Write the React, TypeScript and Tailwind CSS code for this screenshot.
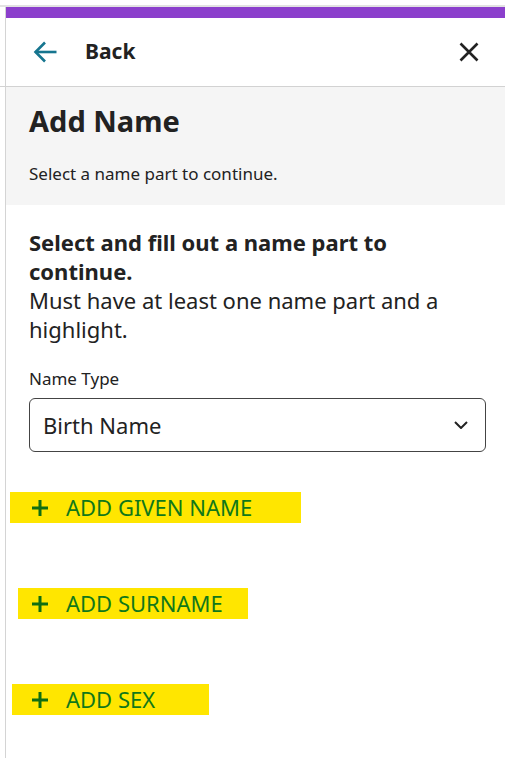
import React from "react";

const font = { fontFamily: '"Noto Sans", "Open Sans", sans-serif' };

function BackArrow() {
  return (
    <svg width="24" height="22" viewBox="0 0 24 22" fill="none" stroke="#16758f" strokeWidth="2.6">
      <path d="M23.5 11H2.5" />
      <path d="M12 1.5L2.5 11L12 20.5" />
    </svg>
  );
}

function CloseIcon() {
  return (
    <svg width="20" height="20" viewBox="0 0 20 20" fill="none" stroke="#222" strokeWidth="2.6">
      <path d="M1.5 1.5L18.5 18.5M18.5 1.5L1.5 18.5" />
    </svg>
  );
}

function Chevron() {
  return (
    <svg width="14" height="8" viewBox="0 0 14 8" fill="none" stroke="#222" strokeWidth="2">
      <path d="M1 1L7 7L13 1" />
    </svg>
  );
}

function Plus() {
  return (
    <svg width="16" height="16" viewBox="0 0 16 16" fill="none" stroke="#0f6e12" strokeWidth="3">
      <path d="M8 0V16M0 8H16" />
    </svg>
  );
}

interface AddButtonProps {
  label: string;
  className: string;
}

function AddButton({ label, className }: AddButtonProps) {
  return (
    <button className={`flex h-[31px] items-center gap-[18px] bg-[#ffe600] ${className}`}>
      <Plus />
      <span className="mb-[2px] text-[22px] leading-none text-[#10781a]">{label}</span>
    </button>
  );
}

export default function App() {
  return (
    <div className="flex min-h-screen flex-col bg-white pt-[5px]" style={font}>
      <div className="h-[2px] bg-[#e2e2e2]" />
      <div className="flex flex-1">
        <div className="w-[5px]">
          <div className="mt-[79px] h-px bg-[#d2d2d2]" />
        </div>
        <div className="flex-1 border-l border-[#d4d4d4]">
          <div className="h-[11px] bg-[#8b3fcc]" />

          <div className="flex h-[69px] items-center border-b border-[#d2d2d2] pl-[27px] pr-[26px]">
            <BackArrow />
            <span className="ml-[28px] text-[21px] font-bold text-[#222]">Back</span>
            <div className="ml-auto">
              <CloseIcon />
            </div>
          </div>

          <div className="bg-[#f5f5f5] px-[23px] pb-[20px] pt-[16px]">
            <h1 className="text-[29px] font-bold leading-[36px] text-[#222]">Add Name</h1>
            <p className="mt-[24px] text-[17px] leading-[22px] text-[#222]">Select a name part to continue.</p>
          </div>

          <div className="flex flex-col items-start pb-10">
            <div className="px-[23px] pt-[23px] text-[22px] leading-[29px] text-[#222]">
              <p className="font-bold">Select and fill out a name part to continue.</p>
              <p>Must have at least one name part and a highlight.</p>
            </div>

            <div className="w-full pl-[23px] pr-[19px]">
              <label className="mt-[24px] block text-[17px] leading-[22px] text-[#222]">Name Type</label>
              <div className="mt-[8px] flex h-[54px] items-center justify-between rounded-[6px] border border-[#444] pl-[13px] pr-[17px]">
                <span className="text-[22px] text-[#222]">Birth Name</span>
                <Chevron />
              </div>
            </div>

            <AddButton label="ADD GIVEN NAME" className="ml-[4px] mt-[40px] w-[291px] pl-[22px]" />
            <AddButton label="ADD SURNAME" className="ml-[12px] mt-[65px] w-[230px] pl-[14px]" />
            <AddButton label="ADD SEX" className="ml-[6px] mt-[65px] w-[197px] pl-[20px]" />
          </div>
        </div>
      </div>
    </div>
  );
}
